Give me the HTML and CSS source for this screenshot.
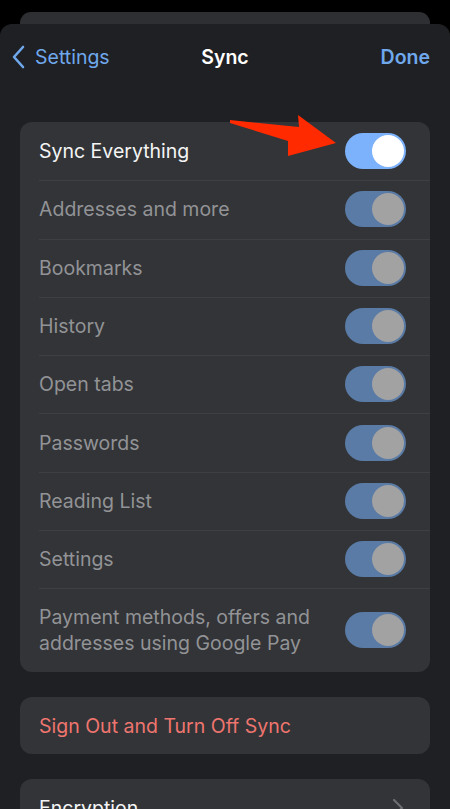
FILE: index.html
```html
<!DOCTYPE html>
<html>
<head>
<meta charset="utf-8">
<link rel="stylesheet" href="styles.css">
</head>
<body>
<div class="backcard"></div>
<div class="sheet">
  <div class="nav">
    <div class="back">
      <svg class="chev" width="14" height="24" viewBox="0 0 14 24"><path d="M12 2 L3 12 L12 22" fill="none" stroke="#6fa8ec" stroke-width="2.6" stroke-linecap="round" stroke-linejoin="round"/></svg>
      <span>Settings</span>
    </div>
    <div class="title">Sync</div>
    <div class="done">Done</div>
  </div>

  <div class="card">
    <div class="row">
      <span class="label on">Sync Everything</span>
      <span class="toggle active"><span class="knob"></span></span>
    </div>
    <div class="row"><span class="label">Addresses and more</span><span class="toggle"><span class="knob"></span></span></div>
    <div class="row"><span class="label">Bookmarks</span><span class="toggle"><span class="knob"></span></span></div>
    <div class="row"><span class="label">History</span><span class="toggle"><span class="knob"></span></span></div>
    <div class="row"><span class="label">Open tabs</span><span class="toggle"><span class="knob"></span></span></div>
    <div class="row"><span class="label">Passwords</span><span class="toggle"><span class="knob"></span></span></div>
    <div class="row"><span class="label">Reading List</span><span class="toggle"><span class="knob"></span></span></div>
    <div class="row"><span class="label">Settings</span><span class="toggle"><span class="knob"></span></span></div>
    <div class="row tall"><span class="label">Payment methods, offers and addresses using Google Pay</span><span class="toggle"><span class="knob"></span></span></div>
    <svg class="arrow" width="120" height="50" viewBox="0 0 120 50"><polygon points="0,10 69,17 68,5 106,33 58,46 58,31 0,13" fill="#ff2a00"/></svg>
  </div>

  <div class="card single">
    <div class="row"><span class="label danger">Sign Out and Turn Off Sync</span></div>
  </div>

  <div class="card single">
    <div class="row"><span class="label on">Encryption</span>
      <svg class="rchev" width="12" height="20" viewBox="0 0 12 20"><path d="M2 2 L10 10 L2 18" fill="none" stroke="#6c6d71" stroke-width="2.2" stroke-linecap="round" stroke-linejoin="round"/></svg>
    </div>
  </div>
</div>
</body>
</html>
```
FILE: styles.css
```css
html, body {
  margin: 0;
  padding: 0;
  background: #000;
  height: 809px;
  overflow: hidden;
  font-family: Inter, "Noto Sans", sans-serif;
}
.backcard {
  margin: 12px 20px 0;
  height: 12px;
  background: #2e2f32;
  border-radius: 11px 11px 0 0;
}
.sheet {
  background: #1f2023;
  border-radius: 12px 12px 0 0;
  height: 785px;
  overflow: hidden;
}
.nav {
  height: 66px;
  display: flex;
  align-items: center;
  justify-content: space-between;
  padding: 0 20px 0 11px;
  position: relative;
  margin-bottom: 32px;
}
.back {
  display: flex;
  align-items: center;
  gap: 10px;
  color: #6fa8ec;
  font-size: 19.5px;
}
.title {
  position: absolute;
  left: 0;
  right: 0;
  text-align: center;
  color: #fff;
  font-size: 19.5px;
  font-weight: 600;
  pointer-events: none;
}
.done {
  color: #6fa8ec;
  font-size: 19.5px;
  font-weight: 600;
}
.card {
  margin: 0 20px;
  background: #323437;
  border-radius: 12px;
  position: relative;
}
.card.single {
  margin-top: 25px;
}
.row {
  height: 58.3px;
  box-sizing: border-box;
  display: flex;
  align-items: center;
  justify-content: space-between;
  padding: 0 24px 0 19px;
  position: relative;
}
.row + .row::before {
  content: "";
  position: absolute;
  top: 0;
  left: 19px;
  right: 0;
  height: 1px;
  background: #3d3f42;
}
.row.tall {
  height: 84px;
}
.card.single .row {
  height: 57px;
}
.label {
  color: #929396;
  font-size: 19.5px;
  line-height: 26px;
  max-width: 290px;
}
.label.on {
  color: #f4f4f5;
}
.label.danger {
  color: #ef756f;
}
.toggle {
  flex: none;
  width: 61px;
  height: 36px;
  border-radius: 18px;
  background: #5a7ba5;
  box-sizing: border-box;
  padding: 2px;
  display: flex;
  justify-content: flex-end;
}
.toggle.active {
  background: #7cb1fb;
}
.knob {
  width: 32px;
  height: 32px;
  border-radius: 50%;
  background: #a2a2a3;
}
.toggle.active .knob {
  background: #fff;
}
.arrow {
  position: absolute;
  left: 210px;
  top: -12px;
}
.rchev {
  margin-right: 2px;
}
```
